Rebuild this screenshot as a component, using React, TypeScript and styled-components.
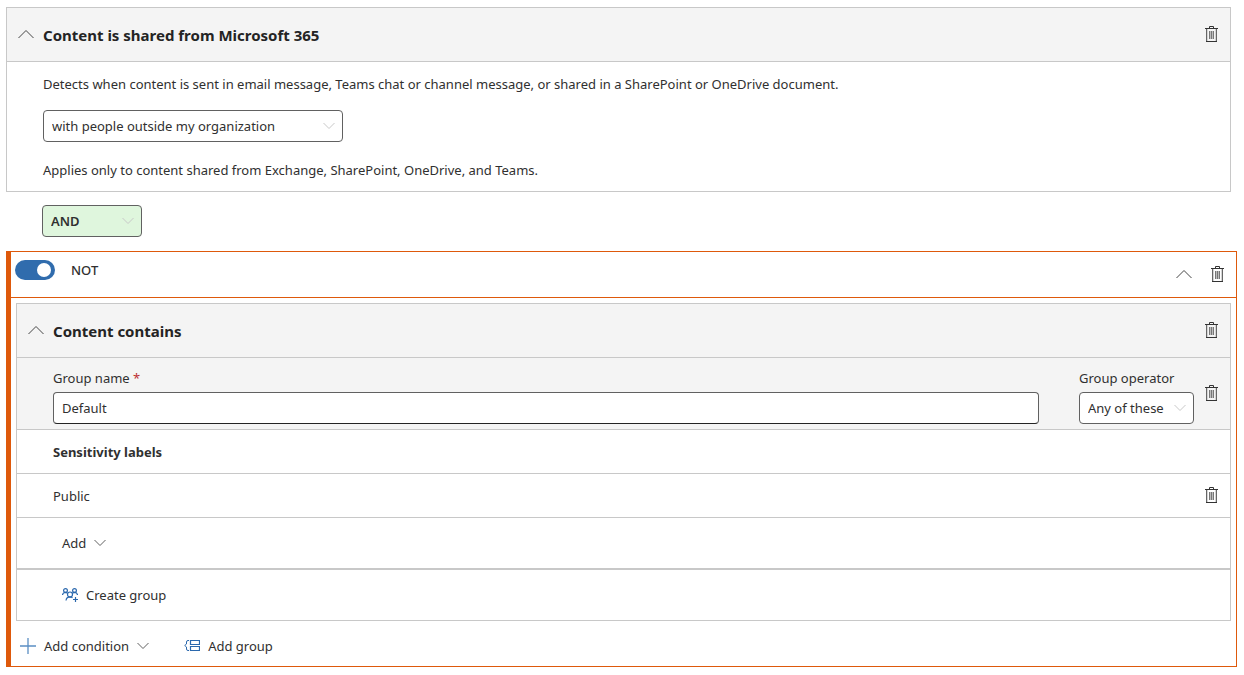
import React from "react";
import styled, { createGlobalStyle } from "styled-components";

const GlobalStyle = createGlobalStyle`
  *, *::before, *::after { box-sizing: border-box; }
  body { margin: 0; background: #fff; }
  body, button, input, select {
    font-family: "Noto Sans", "Open Sans", sans-serif;
    font-size: 13px;
    line-height: 20px;
    color: #303030;
  }
  h2, p { margin: 0; }
`;

const Page = styled.main`
  padding: 7px 7px 8px 6px;
`;

const Panel = styled.section<{ $inset?: boolean }>`
  border: 1px solid #c8c8c8;
  margin: ${(p) => (p.$inset ? "5px 5px 0" : "0 6px 0 0")};
`;

const PanelHeader = styled.header`
  display: flex;
  align-items: center;
  height: 54px;
  padding: 0 11px;
  gap: 9px;
  background: #f4f4f4;
  border-bottom: 1px solid #c8c8c8;
`;

const PanelTitle = styled.h2`
  flex: 1;
  font-size: 15px;
  line-height: 22px;
  font-weight: 700;
  color: #242424;
`;

const IconButton = styled.button`
  display: flex;
  padding: 0 0 2px;
  border: 0;
  background: none;
  color: #333;
  cursor: pointer;
`;

const PanelBody = styled.div`
  display: flex;
  flex-direction: column;
  align-items: flex-start;
  padding: 12px 36px 11px;
  gap: 16px;
`;

const Note = styled.p`
  padding-top: 2px;
`;

const SelectBox = styled.span<{ $width: number }>`
  position: relative;
  display: block;
  width: ${(p) => p.$width}px;
`;

const SelectField = styled.select<{ $green?: boolean }>`
  appearance: none;
  display: block;
  width: 100%;
  height: 32px;
  padding: 0 8px;
  border: 1px solid #616161;
  border-radius: 4px;
  background: ${(p) => (p.$green ? "#dff6dd" : "#fff")};
  font-weight: ${(p) => (p.$green ? 600 : 400)};
`;

const SelectArrow = styled.span`
  position: absolute;
  top: 10px;
  right: 8px;
  display: flex;
  color: #c8c8c8;
  pointer-events: none;
`;

const Joiner = styled.div`
  padding: 13px 36px 14px;
`;

const NotGroup = styled.section`
  border: 1px solid #de590b;
  border-left-width: 5px;
`;

const NotHeader = styled.header`
  display: flex;
  align-items: center;
  height: 46px;
  padding: 0 11px 0 4px;
  border-bottom: 1px solid #de590b;
`;

const SwitchLabel = styled.label`
  display: flex;
  flex: 1;
  align-items: center;
  gap: 16px;
  padding-bottom: 9px;
  font-weight: 500;
`;

const Switch = styled.input`
  appearance: none;
  display: flex;
  align-items: center;
  width: 40px;
  height: 20px;
  margin: 0;
  padding: 0 4px;
  border-radius: 10px;
  background: #306cad;

  &::after {
    content: "";
    width: 14px;
    height: 14px;
    border-radius: 50%;
    background: #fff;
  }

  &:checked::after {
    margin-left: auto;
  }
`;

const HeaderActions = styled.div`
  display: flex;
  align-items: center;
  gap: 17px;
`;

const GroupRow = styled.div`
  display: flex;
  align-items: center;
  height: 72px;
  padding: 0 11px 0 36px;
  background: #f4f4f4;
  border-bottom: 1px solid #c8c8c8;
`;

const Field = styled.label<{ $grow?: boolean }>`
  display: flex;
  flex-direction: column;
  gap: 4px;
  flex: ${(p) => (p.$grow ? "1" : "none")};
  padding-top: 4px;
  margin-right: ${(p) => (p.$grow ? "40px" : "9px")};
`;

const Required = styled.span`
  color: #bc2f32;
`;

const TextInput = styled.input`
  width: 100%;
  height: 32px;
  padding: 0 8px;
  border: 1px solid #616161;
  border-bottom-color: #242424;
  border-radius: 4px;
  background: #fff;
`;

const Row = styled.div<{ $strong?: boolean }>`
  display: flex;
  align-items: center;
  justify-content: space-between;
  height: 44px;
  padding: 0 11px 0 36px;
  border-bottom: 1px solid #c8c8c8;
  font-weight: ${(p) => (p.$strong ? 700 : 400)};
`;

const ActionRow = styled.div<{ $divided?: boolean }>`
  display: flex;
  align-items: center;
  height: ${(p) => (p.$divided ? 52 : 50)}px;
  padding: 0 45px;
  border-bottom: ${(p) => (p.$divided ? "2px solid #c8c8c8" : "0")};
`;

const Footer = styled.footer`
  display: flex;
  align-items: center;
  height: 45px;
  padding: 4px 9px 0;
  gap: 35px;
`;

const TextButton = styled.button`
  display: flex;
  align-items: center;
  gap: 8px;
  padding: 0;
  border: 0;
  background: none;
  cursor: pointer;
`;

const TrashIcon = () => (
  <svg width="16" height="16" viewBox="0 0 16 16" fill="none" stroke="currentColor" aria-hidden="true">
    <path d="M4.500 3v12M12.500 3v12" stroke="#d4d4d4" />
    <path d="M6.500 5v8M8.500 5v8M10.500 5v8" stroke="#777" />
    <path d="M7.500 5v8M9.500 5v8" stroke="#bdbdbd" />
    <path d="M3.500 3v12M13.500 3v12" stroke="#666" />
    <path d="M2 2.500h13M6.500 2.500v-2h4v2M3 15.500h11" />
  </svg>
);

const ChevronUp = () => (
  <svg width="16" height="16" viewBox="0 0 16 16" fill="none" stroke="#444" aria-hidden="true">
    <path d="M.5 12 8 4.500l7.500 7.500" />
  </svg>
);

const ChevronDown = ({ color = "currentColor" }: { color?: string }) => (
  <svg width="12" height="12" viewBox="0 0 12 12" fill="none" stroke={color} aria-hidden="true">
    <path d="M.5 3 6 8.500 11.500 3" />
  </svg>
);

const PlusIcon = () => (
  <svg width="16" height="16" viewBox="0 0 16 16" fill="none" stroke="#5b8fc4" aria-hidden="true">
    <path d="M0 8h16M8 0v16" strokeWidth="1.300" />
  </svg>
);

const AddGroupIcon = () => (
  <svg width="16" height="16" viewBox="0 0 16 16" fill="none" stroke="#2b68ad" aria-hidden="true">
    <path d="M6.500 2.500h9v4h-9zM6.500 8.500h9v4h-9z" strokeWidth="1.200" />
    <path d="M5 2.500H4q-1.500 0-1.500 1.500v2l-1.800 1.500 1.800 1.500v2q0 1.500 1.500 1.500h1" />
  </svg>
);

const CreateGroupIcon = () => (
  <svg width="16" height="16" viewBox="0 0 16 16" fill="none" stroke="#2b68ad" strokeWidth="1.200" aria-hidden="true">
    <circle cx="3.500" cy="3.500" r="1.900" />
    <circle cx="12.500" cy="3.500" r="1.900" />
    <circle cx="8" cy="7.500" r="2.500" />
    <path d="M.5 8q.2-2.500 3-2.600 1.200 0 2 1M15.500 8q-.2-2.500-3-2.600-1.200 0-2 1M4 13.500q.5-3.500 4-3.600 1.500 0 2.500.8M13.500 10v5M11 12.500h5" />
  </svg>
);

const DeleteButton = ({ label }: { label: string }) => (
  <IconButton type="button" aria-label={label}>
    <TrashIcon />
  </IconButton>
);

type SelectProps = { width: number; value: string; label?: string; green?: boolean };

const Select = ({ width, value, label, green }: SelectProps) => (
  <SelectBox $width={width}>
    <SelectField $green={green} aria-label={label} defaultValue={value}>
      <option>{value}</option>
    </SelectField>
    <SelectArrow>
      <ChevronDown />
    </SelectArrow>
  </SelectBox>
);

export default function App() {
  return (
    <>
      <GlobalStyle />
      <Page>
        <Panel>
          <PanelHeader>
            <IconButton type="button" aria-label="Collapse">
              <ChevronUp />
            </IconButton>
            <PanelTitle>Content is shared from Microsoft 365</PanelTitle>
            <DeleteButton label="Delete condition" />
          </PanelHeader>
          <PanelBody>
            <p>
              Detects when content is sent in email message, Teams chat or channel message, or
              shared in a SharePoint or OneDrive document.
            </p>
            <Select width={300} value="with people outside my organization" label="Shared with" />
            <Note>Applies only to content shared from Exchange, SharePoint, OneDrive, and Teams.</Note>
          </PanelBody>
        </Panel>
        <Joiner>
          <Select width={100} value="AND" label="Operator" green />
        </Joiner>
        <NotGroup>
          <NotHeader>
            <SwitchLabel>
              <Switch type="checkbox" role="switch" defaultChecked />
              NOT
            </SwitchLabel>
            <HeaderActions>
              <IconButton type="button" aria-label="Collapse">
                <ChevronUp />
              </IconButton>
              <DeleteButton label="Delete group" />
            </HeaderActions>
          </NotHeader>
          <Panel $inset>
            <PanelHeader>
              <IconButton type="button" aria-label="Collapse">
                <ChevronUp />
              </IconButton>
              <PanelTitle>Content contains</PanelTitle>
              <DeleteButton label="Delete condition" />
            </PanelHeader>
            <GroupRow>
              <Field $grow>
                <span>
                  Group name <Required>*</Required>
                </span>
                <TextInput type="text" defaultValue="Default" />
              </Field>
              <Field>
                Group operator
                <Select width={115} value="Any of these" />
              </Field>
              <DeleteButton label="Delete group" />
            </GroupRow>
            <Row $strong>Sensitivity labels</Row>
            <Row>
              Public
              <DeleteButton label="Delete label" />
            </Row>
            <ActionRow $divided>
              <TextButton type="button">
                Add
                <ChevronDown color="#616161" />
              </TextButton>
            </ActionRow>
            <ActionRow>
              <TextButton type="button">
                <CreateGroupIcon />
                Create group
              </TextButton>
            </ActionRow>
          </Panel>
          <Footer>
            <TextButton type="button">
              <PlusIcon />
              Add condition
              <ChevronDown color="#616161" />
            </TextButton>
            <TextButton type="button">
              <AddGroupIcon />
              Add group
            </TextButton>
          </Footer>
        </NotGroup>
      </Page>
    </>
  );
}
